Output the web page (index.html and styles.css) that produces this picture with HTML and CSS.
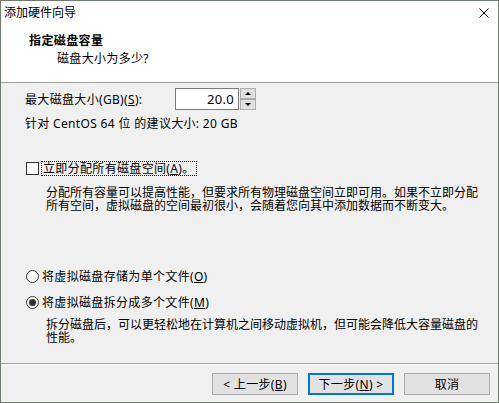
FILE: index.html
```html
<!DOCTYPE html>
<html lang="zh-CN">
<head>
    <meta charset="UTF-8">
    <title>添加硬件向导</title>
    <link rel="stylesheet" href="styles.css">
</head>
<body>

    <div class="window">
        <!-- Title bar and wizard header -->
        <div class="header">
            <div class="titlebar">
                <span class="title">添加硬件向导</span>
                <svg class="close" width="10" height="10" viewBox="0 0 10 10">
                    <path d="M0.5 0.5 L9.5 9.5 M9.5 0.5 L0.5 9.5" stroke="#000" stroke-width="1" fill="none"/>
                </svg>
            </div>
            <div class="heading">指定磁盘容量</div>
            <div class="subheading">磁盘大小为多少?</div>
        </div>

        <!-- Page body -->
        <div class="content">
            <div class="size-row">
                <span class="size-label">最大磁盘大小(GB)(<u>S</u>):</span>
                <div class="spin">
                    <div class="spin-value">20.0</div>
                    <div class="spin-buttons">
                        <div class="spin-btn"><span class="tri-up"></span></div>
                        <div class="spin-btn"><span class="tri-down"></span></div>
                    </div>
                </div>
            </div>
            <div class="hint">针对 CentOS 64 位 的建议大小: 20 GB</div>

            <div class="option check-row">
                <span class="checkbox"></span>
                <span class="focus">立即分配所有磁盘空间(<u>A</u>)。</span>
            </div>
            <p class="desc">分配所有容量可以提高性能，但要求所有物理磁盘空间立即可用。如果不立即分配所有空间，虚拟磁盘的空间最初很小，会随着您向其中添加数据而不断变大。</p>

            <div class="option radio-first">
                <span class="radio"></span>
                <span>将虚拟磁盘存储为单个文件(<u>O</u>)</span>
            </div>
            <div class="option radio-second">
                <span class="radio checked"></span>
                <span>将虚拟磁盘拆分成多个文件(<u>M</u>)</span>
            </div>
            <p class="desc desc-split">拆分磁盘后，可以更轻松地在计算机之间移动虚拟机，但可能会降低大容量磁盘的性能。</p>
        </div>

        <!-- Wizard buttons -->
        <div class="footer">
            <button class="btn">&lt; 上一步(<u>B</u>)</button>
            <button class="btn default">下一步(<u>N</u>) &gt;</button>
            <button class="btn">取消</button>
        </div>
    </div>

</body>
</html>
```

FILE: styles.css
```css
/* Page and dialog frame */
body {
    margin: 0;
    font-family: "Noto Sans", "Noto Sans CJK SC", sans-serif;
    font-size: 12px;
    color: #000;
}

.window {
    box-sizing: border-box;
    width: 499px;
    height: 403px;
    border: 1px solid #6f7c6f;
    background: #f0f0f0;
    display: flex;
    flex-direction: column;
    letter-spacing: 0.33px;
}

/* White header with title bar */
.header {
    background: #fff;
    height: 81px;
    border-bottom: 1px solid #a0a0a0;
}

.titlebar {
    height: 24px;
    display: flex;
    align-items: center;
    justify-content: space-between;
    padding: 0 9px 0 3px;
    letter-spacing: 0;
}

.title {
    line-height: 24px;
}

.heading {
    font-weight: bold;
    line-height: 15px;
    margin-top: 8px;
    padding-left: 28px;
    letter-spacing: 0.4px;
}

.subheading {
    line-height: 15px;
    margin-top: 3px;
    padding-left: 56px;
}

/* Body area */
.content {
    flex: 1;
    padding: 5px 0 0 24px;
}

.size-row {
    display: flex;
    align-items: center;
    height: 22px;
}

.size-label {
    width: 150px;
}

.spin {
    display: flex;
    height: 22px;
}

.spin-value {
    box-sizing: border-box;
    width: 64px;
    height: 22px;
    border: 1px solid #7a7a7a;
    background: #fff;
    text-align: right;
    padding-right: 4px;
    line-height: 20px;
    font-size: 13px;
}

.spin-buttons {
    display: flex;
    flex-direction: column;
    margin-left: 1px;
}

.spin-btn {
    box-sizing: border-box;
    width: 16px;
    height: 11px;
    border: 1px solid #adadad;
    background: #e1e1e1;
    display: flex;
    align-items: center;
    justify-content: center;
}

.tri-up {
    border-left: 3px solid transparent;
    border-right: 3px solid transparent;
    border-bottom: 3px solid #000;
}

.tri-down {
    border-left: 3px solid transparent;
    border-right: 3px solid transparent;
    border-top: 3px solid #000;
}

.hint {
    line-height: 15px;
    margin-top: 6px;
}

/* Checkbox and radio rows */
.option {
    display: flex;
    align-items: center;
    line-height: 15px;
}

.check-row {
    margin-top: 30px;
}

.radio-first {
    margin-top: 57px;
}

.radio-second {
    margin-top: 11px;
}

.checkbox {
    box-sizing: border-box;
    width: 13px;
    height: 13px;
    border: 1px solid #333;
    background: #fff;
    margin: 0 2px 0 1px;
}

.radio {
    box-sizing: border-box;
    width: 13px;
    height: 13px;
    border: 1px solid #333;
    border-radius: 50%;
    background: #fff;
    margin: 0 3px 0 1px;
    display: flex;
    align-items: center;
    justify-content: center;
}

.radio.checked::after {
    content: "";
    width: 7px;
    height: 7px;
    border-radius: 50%;
    background: #333;
}

.focus {
    border: 1px dotted #000;
    padding: 0 1px;
    line-height: 13px;
}

.desc {
    margin: 10px 0 0 21px;
    width: 436px;
    line-height: 13px;
    letter-spacing: 0;
}

.desc-split {
    margin-top: 8px;
}

/* Bottom button strip */
.footer {
    height: 39px;
    box-sizing: border-box;
    border-top: 1px solid #a0a0a0;
    box-shadow: inset 0 1px 0 #fff;
    padding: 9px 8px 0 0;
    display: flex;
    justify-content: flex-end;
    gap: 10px;
}

.btn {
    box-sizing: border-box;
    width: 86px;
    height: 22px;
    border: 1px solid #adadad;
    background: #e1e1e1;
    font-family: inherit;
    font-size: 12px;
    letter-spacing: 0.33px;
    color: #000;
    padding: 0;
}

.btn.default {
    border: 2px solid #0078d7;
}
```
